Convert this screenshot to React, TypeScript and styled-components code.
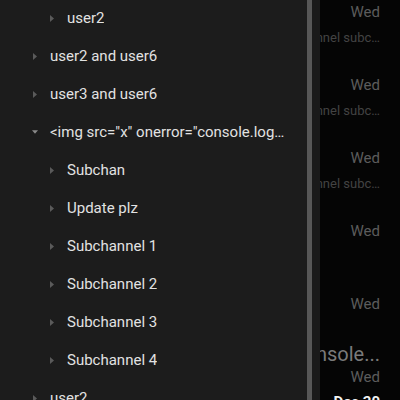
import React from "react";
import styled, { createGlobalStyle } from "styled-components";

const GlobalStyle = createGlobalStyle`
  html, body {
    margin: 0;
    padding: 0;
    background: #050505;
    font-family: Roboto, "Noto Sans", "Liberation Sans", sans-serif;
  }
`;

const Screen = styled.div`
  display: flex;
  width: 400px;
  height: 400px;
  overflow: hidden;
`;

const Drawer = styled.div`
  width: 307px;
  flex-shrink: 0;
  background: #1c1c1c;
  overflow: hidden;
`;

const ScrollThumb = styled.div`
  width: 5px;
  flex-shrink: 0;
  background: #575757;
`;

const Gutter = styled.div`
  width: 8px;
  flex-shrink: 0;
  background: #1a1a1a;
`;

const TreeList = styled.ul`
  list-style: none;
  margin: -1px 0 0;
  padding: 0;
`;

const TreeRow = styled.li<{ $depth: number }>`
  display: flex;
  align-items: center;
  height: 38px;
  padding-left: ${({ $depth }) => ($depth === 0 ? 32 : 49)}px;
  padding-right: 22px;
  gap: 12px;
`;

const Chevron = styled.span<{ $open?: boolean }>`
  width: 6px;
  height: 8px;
  flex-shrink: 0;
  display: flex;
  align-items: center;
  justify-content: center;
  color: ${({ $open }) => ($open ? "#8a8a8a" : "#5a5a5a")};
`;

const Label = styled.span`
  font-size: 15px;
  color: #e2e2e2;
  white-space: nowrap;
  overflow: hidden;
  text-overflow: ellipsis;
`;

const Channels = styled.div`
  flex: 1;
  overflow: hidden;
  background: #050505;
`;

const ChannelList = styled.div`
  margin-top: -23px;
`;

const ChannelItem = styled.div`
  height: 73px;
  display: flex;
  flex-direction: column;
`;

const Line = styled.div<{ $h: number }>`
  height: ${({ $h }) => $h}px;
  display: flex;
  align-items: center;
  justify-content: flex-end;
  padding-right: 20px;
  white-space: nowrap;
`;

const Name = styled.span`
  flex-shrink: 0;
  font-size: 20px;
  color: #7a7a7a;
`;

const DateText = styled.span<{ $strong?: boolean }>`
  flex-shrink: 0;
  font-size: 15px;
  color: ${({ $strong }) => ($strong ? "#f2f2f2" : "#5c5c5c")};
  font-weight: ${({ $strong }) => ($strong ? 700 : 400)};
`;

const Preview = styled.span`
  flex-shrink: 0;
  font-size: 13px;
  color: #434343;
`;

const Caret = ({ open }: { open?: boolean }) => (
  <Chevron $open={open}>
    {open ? (
      <svg width="7" height="4" viewBox="0 0 7 4">
        <path d="M0 0h7L3.5 4z" fill="currentColor" />
      </svg>
    ) : (
      <svg width="4" height="7" viewBox="0 0 4 7">
        <path d="M0 0l4 3.5L0 7z" fill="currentColor" />
      </svg>
    )}
  </Chevron>
);

const tree: { depth: number; label: string; open?: boolean }[] = [
  { depth: 1, label: "user2" },
  { depth: 0, label: "user2 and user6" },
  { depth: 0, label: "user3 and user6" },
  { depth: 0, label: '<img src="x" onerror="console.log(1)">', open: true },
  { depth: 1, label: "Subchan" },
  { depth: 1, label: "Update plz" },
  { depth: 1, label: "Subchannel 1" },
  { depth: 1, label: "Subchannel 2" },
  { depth: 1, label: "Subchannel 3" },
  { depth: 1, label: "Subchannel 4" },
  { depth: 0, label: "user2" },
];

const channels: { name?: string; date: string; preview?: string; next?: string }[] = [
  { date: "Wed", preview: "Subchannel subchannel…" },
  { date: "Wed", preview: "Subchannel subchannel…" },
  { date: "Wed", preview: "Subchannel subchannel…" },
  { date: "Wed" },
  { date: "Wed" },
  { name: '<img src="x" onerror="console...', date: "Wed", next: "Dec 30" },
];

export default function App() {
  return (
    <>
      <GlobalStyle />
      <Screen>
        <Drawer>
          <TreeList>
            {tree.map((t, i) => (
              <TreeRow key={i} $depth={t.depth}>
                <Caret open={t.open} />
                <Label>{t.label}</Label>
              </TreeRow>
            ))}
          </TreeList>
        </Drawer>
        <ScrollThumb />
        <Gutter />
        <Channels>
          <ChannelList>
            {channels.map((c, i) => (
              <ChannelItem key={i}>
                <Line $h={23}>{c.name && <Name>{c.name}</Name>}</Line>
                <Line $h={24}>
                  <DateText>{c.date}</DateText>
                </Line>
                <Line $h={26}>
                  {c.preview && <Preview>{c.preview.replace("subchannel…", "subc…")}</Preview>}
                  {c.next && <DateText $strong>{c.next}</DateText>}
                </Line>
              </ChannelItem>
            ))}
          </ChannelList>
        </Channels>
      </Screen>
    </>
  );
}
